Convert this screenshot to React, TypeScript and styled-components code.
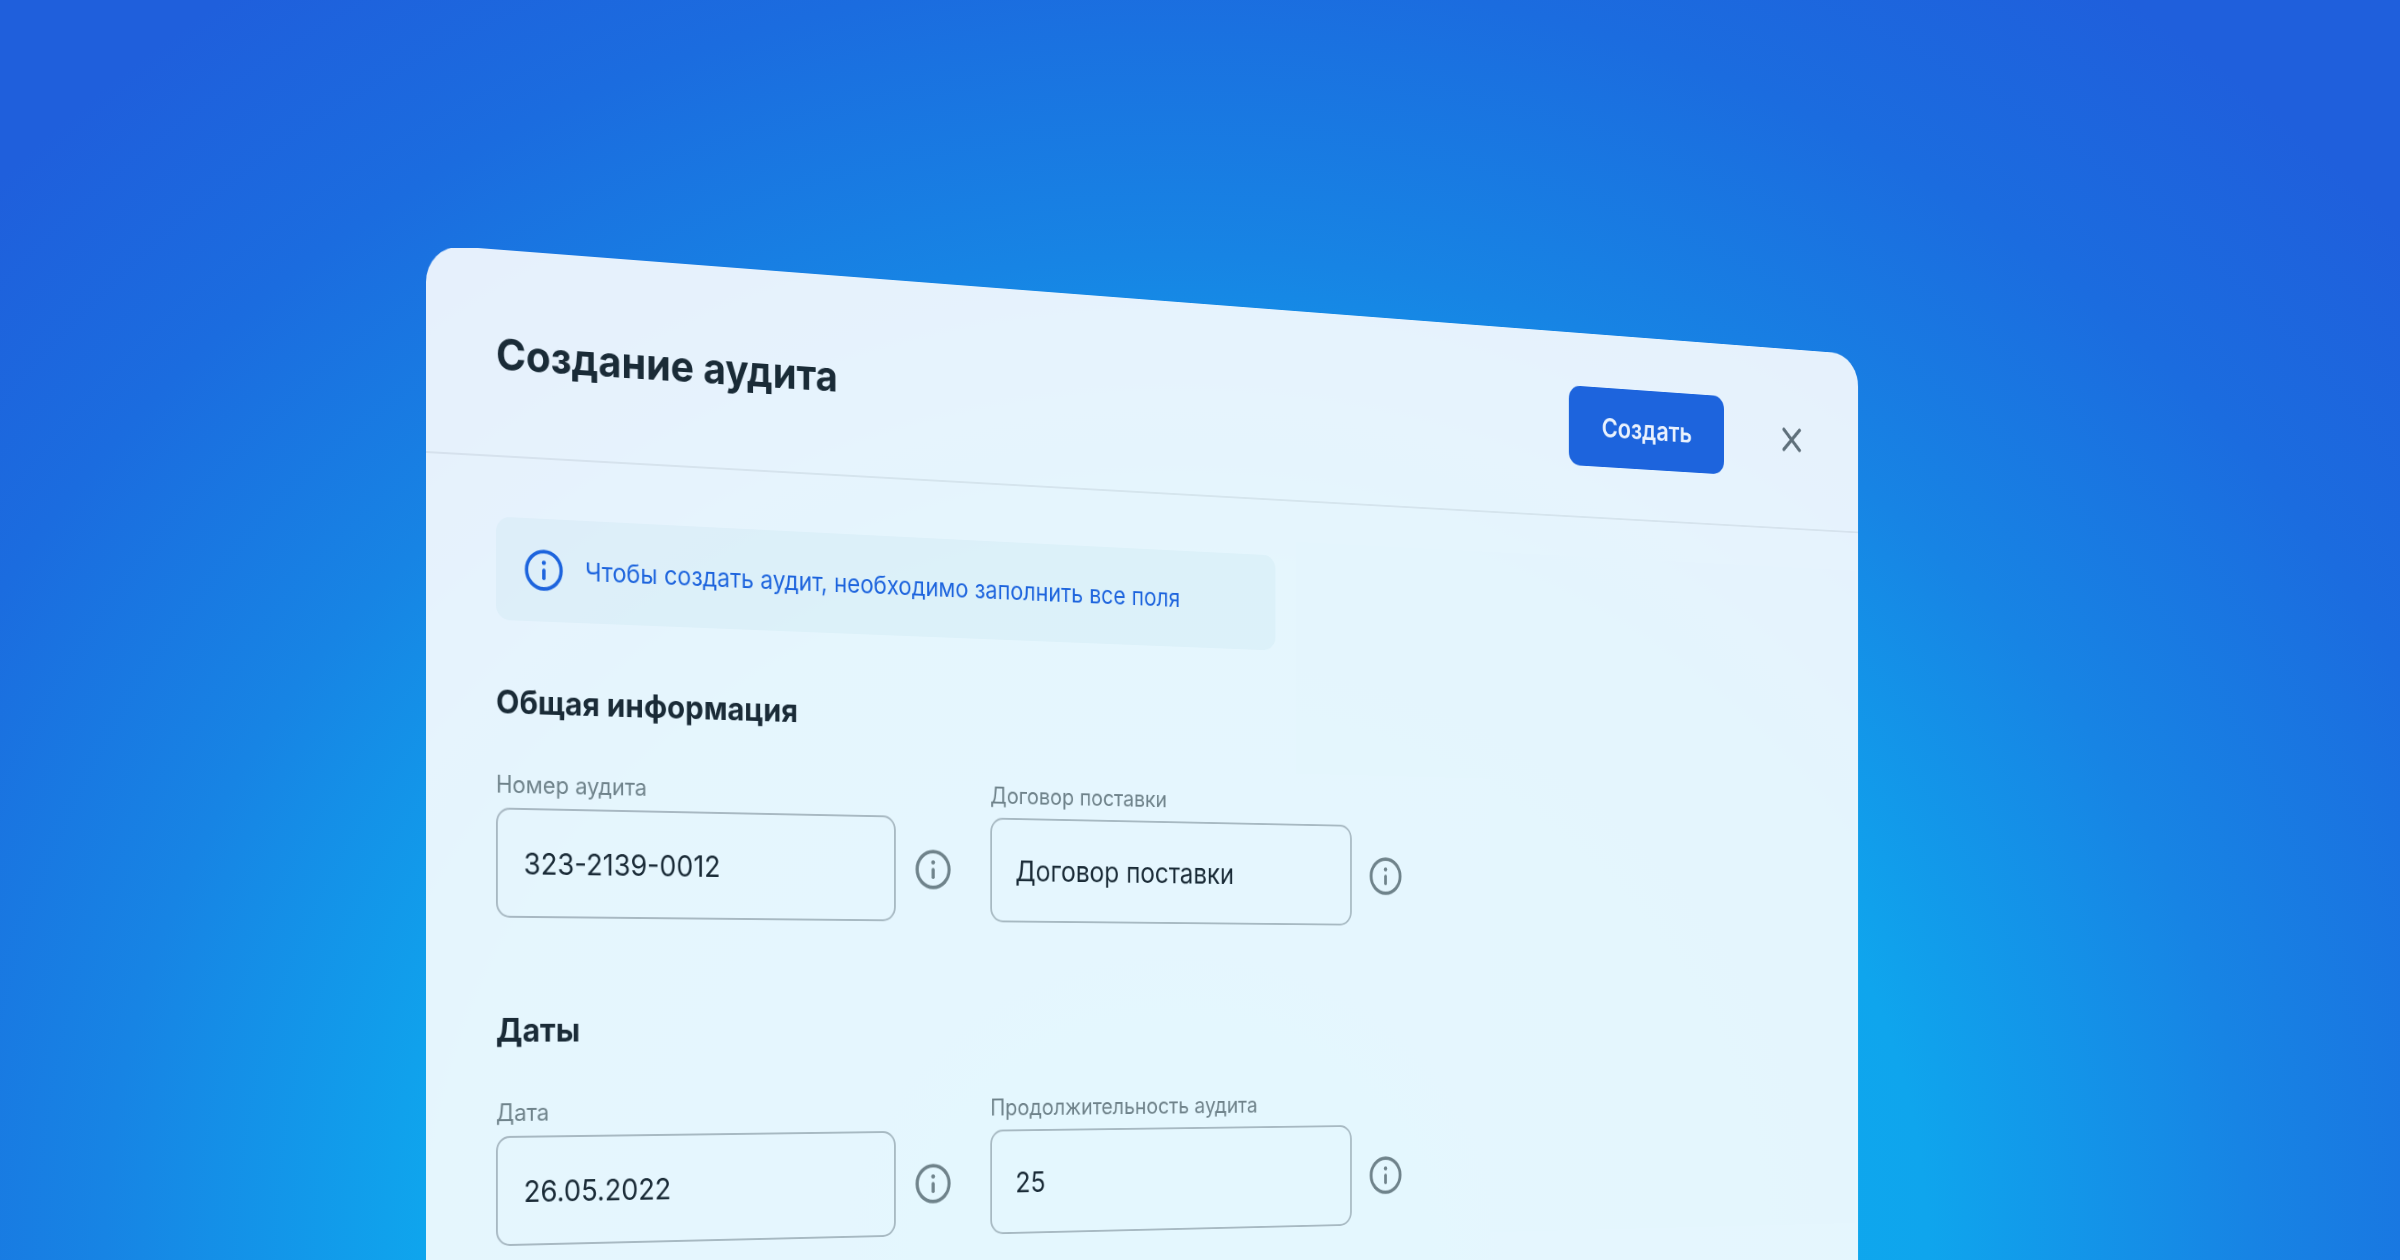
import React, { useId } from "react";
import styled, { createGlobalStyle } from "styled-components";

const ink = "#1a2b37";
const muted = "#6f838b";
const accent = "#1d64dd";

const GlobalStyle = createGlobalStyle`
  *, *::before, *::after { box-sizing: border-box; }
  body {
    margin: 0;
    font-family: Inter, "Noto Sans", sans-serif;
    color: ${ink};
  }
`;

const Page = styled.main`
  min-height: 100vh;
  padding-top: 248px;
  background: radial-gradient(
    ellipse 1600px 1500px at 49% 100%,
    #06b3f0 0,
    #0fa5ed 47%,
    #1784e4 67%,
    #1b6cdf 86%,
    #1f5fdc 103%
  );
`;

/* The viewer's eye sits level with the lower part of the dialog. */
const Stage = styled.div`
  height: calc(100vh - 248px);
  overflow: hidden;
  perspective: 5280px;
  perspective-origin: 50% 761px;
`;

/* The transparent outline keeps the slanted edges antialiased. */
const Dialog = styled.section`
  width: 74.25%;
  margin: -4px 0 0 17.75%;
  border-radius: 38px 38px 0 0;
  outline: 2px solid transparent;
  background: rgba(255, 255, 255, 0.89);
  transform-origin: left top;
  transform: rotateY(30deg);
`;

const Header = styled.header`
  display: flex;
  align-items: center;
  padding: 60px 72px 57px 75px;
  border-bottom: 2px solid rgba(26, 43, 55, 0.08);
`;

const Title = styled.h1`
  flex: 1;
  margin: 0;
  font-size: 44px;
  line-height: 56px;
  font-weight: 700;
`;

const PrimaryButton = styled.button`
  padding: 27px 45px;
  border: 0;
  border-radius: 15px;
  background: ${accent};
  color: #e9f1fd;
  font: 600 30px/36px Inter, "Noto Sans", sans-serif;
  cursor: pointer;
`;

const IconButton = styled.button<{ $size: number }>`
  display: flex;
  flex: none;
  width: ${(p) => p.$size}px;
  height: ${(p) => p.$size}px;
  padding: 0;
  border: 0;
  background: none;
  color: ${muted};
  cursor: pointer;
`;

const CloseButton = styled(IconButton)`
  margin-left: 72px;
  color: #5f707b;
`;

const Body = styled.div`
  padding: 60px 75px 140px;
`;

const Banner = styled.p`
  display: flex;
  align-items: center;
  gap: 23px;
  width: fit-content;
  margin: 0 0 62px;
  padding: 30px 120px 30px 30px;
  border-radius: 15px;
  background: rgba(16, 150, 170, 0.045);
  color: ${accent};
  font-size: 26px;
  line-height: 44px;
`;

const Section = styled.section`
  & + & {
    margin-top: 93px;
  }
`;

const SectionTitle = styled.h2`
  margin: 0 0 49px;
  font-size: 33px;
  line-height: 40px;
  font-weight: 700;
`;

const FieldRow = styled.div`
  display: flex;
  gap: 46px;
`;

const FieldBox = styled.div`
  display: flex;
  flex-direction: column;
  gap: 8px;
`;

const Label = styled.label`
  color: ${muted};
  font-size: 24px;
  line-height: 30px;
`;

const Control = styled.div`
  display: flex;
  align-items: center;
  gap: 22px;
`;

const Input = styled.input`
  width: 450px;
  height: 111px;
  padding: 0 28px;
  border: 2px solid rgba(26, 43, 55, 0.3);
  border-radius: 15px;
  background: none;
  color: ${ink};
  font: 400 30px/36px Inter, "Noto Sans", sans-serif;
`;

const Glyph = styled.svg`
  display: block;
  flex: none;
  width: 44px;
  height: 44px;
`;

const CloseGlyph = styled(Glyph)`
  width: 48px;
  height: 48px;
`;

function InfoIcon() {
  return (
    <Glyph viewBox="0 0 24 24" fill="none" stroke="currentColor" aria-hidden="true">
      <circle cx="12" cy="12" r="10.3" strokeWidth="2" />
      <circle cx="12" cy="7.9" r="1.2" fill="currentColor" stroke="none" />
      <path d="M12 12.1v4.4" strokeWidth="2" strokeLinecap="round" />
    </Glyph>
  );
}

function CloseIcon() {
  return (
    <CloseGlyph viewBox="0 0 24 24" fill="none" stroke="currentColor" aria-hidden="true">
      <path d="M6.4 6.2l11.2 11.6M17.6 6.2L6.4 17.8" strokeWidth="2.1" strokeLinecap="round" />
    </CloseGlyph>
  );
}

function Field({ label, value }: { label: string; value: string }) {
  const id = useId();
  return (
    <FieldBox>
      <Label htmlFor={id}>{label}</Label>
      <Control>
        <Input id={id} type="text" defaultValue={value} />
        <IconButton $size={44} type="button" aria-label={label}>
          <InfoIcon />
        </IconButton>
      </Control>
    </FieldBox>
  );
}

export default function App() {
  return (
    <>
      <GlobalStyle />
      <Page>
        <Stage>
          <Dialog>
            <Header>
              <Title>Создание аудита</Title>
              <PrimaryButton type="button">Создать</PrimaryButton>
              <CloseButton $size={48} type="button" aria-label="Закрыть">
                <CloseIcon />
              </CloseButton>
            </Header>
            <Body>
              <Banner>
                <InfoIcon />
                Чтобы создать аудит, необходимо заполнить все поля
              </Banner>
              <Section>
                <SectionTitle>Общая информация</SectionTitle>
                <FieldRow>
                  <Field label="Номер аудита" value="323-2139-0012" />
                  <Field label="Договор поставки" value="Договор поставки" />
                </FieldRow>
              </Section>
              <Section>
                <SectionTitle>Даты</SectionTitle>
                <FieldRow>
                  <Field label="Дата" value="26.05.2022" />
                  <Field label="Продолжительность аудита" value="25" />
                </FieldRow>
              </Section>
            </Body>
          </Dialog>
        </Stage>
      </Page>
    </>
  );
}
